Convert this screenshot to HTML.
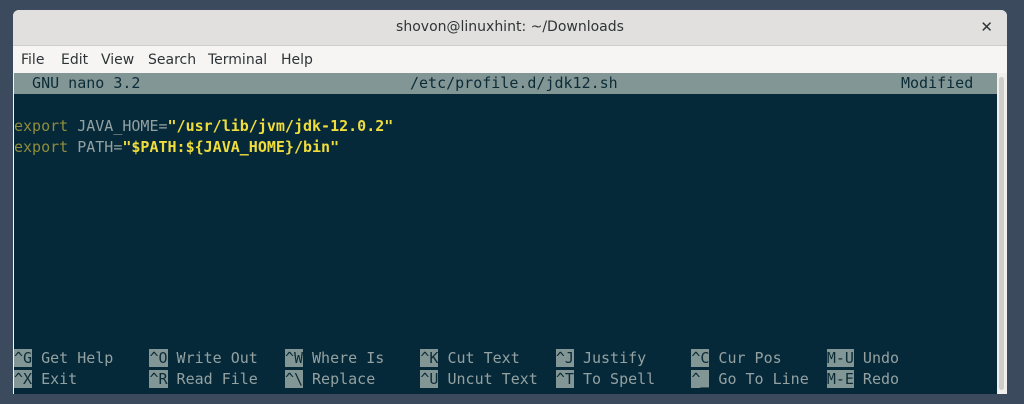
<!DOCTYPE html>
<html><head><style>
body{margin:0;width:1024px;height:404px;background:#3b4a5c;position:relative;overflow:hidden;font-family:"DejaVu Sans","Liberation Sans",sans-serif}
.win{position:absolute;left:13px;top:10px;width:994px;height:384px;background:#f6f5f4;border-radius:6px 6px 0 0;overflow:hidden}
.title{height:35px;background:#e2e0de;border-bottom:1px solid #cfcdca;text-align:center;line-height:35px;font-size:14px;color:#2e3436}
.close{position:absolute;right:14px;top:0;font-size:15px;font-weight:bold;color:#2e3436;line-height:35px}
.menu{height:26px;line-height:28px;font-size:14px;color:#2e3436;padding-left:8px;position:relative}
.menu span{position:absolute;top:0}
.term{position:absolute;left:1px;top:63px;width:983px;height:321px;background:#06293a;font-family:"DejaVu Sans Mono","Liberation Mono",monospace;font-size:15px;color:#93a1a1;white-space:pre}
.bar{position:absolute;left:0;top:0;width:983px;height:21px;background:#839696;color:#0b2b36;line-height:21px}
.l{position:absolute;left:0;line-height:21px}
.k{background:#839696;color:#0b2b36}
.y{color:#f0dd3c;font-weight:bold}
.o{color:#8f8d3a}
.sb{position:absolute;left:984px;top:63px;width:10px;height:321px;background:#f0efee}
.sb div{position:absolute;left:2px;top:4px;width:5px;height:313px;background:#cfcdca;border-radius:3px}
</style></head><body>
<div class="win">
<div class="title">shovon@linuxhint: ~/Downloads<span class="close">✕</span></div>
<div class="menu"><span style="left:8px">File</span><span style="left:48px">Edit</span><span style="left:88px">View</span><span style="left:135px">Search</span><span style="left:195px">Terminal</span><span style="left:268px">Help</span></div>
<div class="term">
<div class="bar">  GNU nano 3.2<span style="position:absolute;left:396px">/etc/profile.d/jdk12.sh</span><span style="position:absolute;left:887px">Modified</span></div>
<div class="l" style="top:43px"><span class="o">export</span> JAVA_HOME=<span class="y">"/usr/lib/jvm/jdk-12.0.2"</span></div>
<div class="l" style="top:64px"><span class="o">export</span> PATH=<span class="y">"$PATH:${JAVA_HOME}/bin"</span></div>
<div class="l" style="top:275px"><span class="k">^G</span> Get Help    <span class="k">^O</span> Write Out   <span class="k">^W</span> Where Is    <span class="k">^K</span> Cut Text    <span class="k">^J</span> Justify     <span class="k">^C</span> Cur Pos     <span class="k">M-U</span> Undo</div>
<div class="l" style="top:296px"><span class="k">^X</span> Exit        <span class="k">^R</span> Read File   <span class="k">^\</span> Replace     <span class="k">^U</span> Uncut Text  <span class="k">^T</span> To Spell    <span class="k">^_</span> Go To Line  <span class="k">M-E</span> Redo</div>
</div>
<div class="sb"><div></div></div>
</div>
</body></html>
